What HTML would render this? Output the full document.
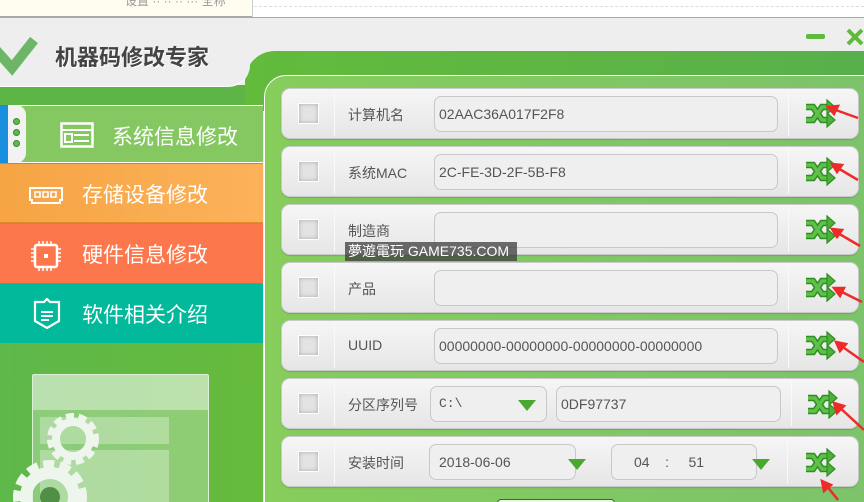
<!DOCTYPE html>
<html><head><meta charset="utf-8"><style>
*{margin:0;padding:0;box-sizing:border-box}
html,body{width:864px;height:502px;overflow:hidden}
body{position:relative;background:#eeeeee;font-family:"Liberation Sans","Noto Sans CJK SC",sans-serif}
.abs{position:absolute}
.row{position:absolute;left:281px;width:578px;height:51px;background:linear-gradient(#f6f6f6,#e6e6e6);border:1px solid #c9c9c9;border-radius:9px;box-shadow:0 1px 1px rgba(0,0,0,.15)}
.cb{position:absolute;left:16px;top:14px;width:21px;height:21px;background:#e3e3e3;border:1px solid #fff;box-shadow:inset 0 0 4px rgba(0,0,0,.25)}
.d1{position:absolute;left:52px;top:2px;bottom:2px;width:1px;background:#d6d6d6;border-right:1px solid #fafafa}
.d2{position:absolute;left:506px;top:2px;bottom:2px;width:1px;background:#d6d6d6;border-right:1px solid #fafafa}
.lb{position:absolute;left:66px;top:16px;font-size:14px;color:#555}
.in{position:absolute;top:7px;height:36px;background:#efefef;border:1px solid #c8c8c8;border-radius:7px;font-size:14px;color:#555;padding:9px 4px}
.tri{position:absolute;width:0;height:0;border-left:9px solid transparent;border-right:9px solid transparent;border-top:11px solid #4aa82e}
.menu{position:absolute;left:0;width:263px;color:#fff;font-size:21px}
.menu span{position:absolute;left:82px;top:15px}
</style></head><body>
<div class="abs" style="left:0;top:0;width:864px;height:18px;background:#fffdf0;border-bottom:2px solid #a9a9a9"></div>
<div class="abs" style="left:252px;top:0;width:612px;height:17px;background:#fff;border-left:1px solid #ccc"></div>
<div class="abs" style="left:254px;top:6px;width:610px;border-top:1px dashed #ddd"></div>
<div class="abs" style="left:125px;top:-8px;font-size:12px;color:#999">设置 ·· ·· ·· ··· 全称</div>
<div class="abs" style="left:0;top:85px;width:300px;height:25px;background:#5db545"></div>
<div class="abs" style="left:245px;top:51px;width:619px;height:60px;background:linear-gradient(90deg,#63bb3c,#58b04c);border-radius:30px 0 0 0"></div>
<div class="abs" style="left:0;top:18px;width:250px;height:68px;background:#eeeeee;border-bottom-right-radius:22px;box-shadow:0 1px 0 #fff"></div>
<svg class="abs" style="left:0;top:30px" width="40" height="52" viewBox="0 0 40 52"><path d="M-4 20 L12 38 L34 10" fill="none" stroke="#6db668" stroke-width="10"/></svg>
<div class="abs" style="left:55px;top:40px;font-size:22px;font-weight:bold;color:#444;text-shadow:1px 1px 0 #fff">机器码修改专家</div>
<div class="abs" style="left:806px;top:34px;width:19px;height:5px;background:#5dba3a;border-radius:2px"></div>
<svg class="abs" style="left:846px;top:28px" width="18" height="18"><path d="M2 2 L16 16 M16 2 L2 16" stroke="#5dba3a" stroke-width="4"/></svg>
<div class="abs" style="left:264px;top:75px;width:610px;height:440px;background:linear-gradient(90deg,#86cd5c,#7cc36b);border:1px solid #fff;border-radius:22px 0 0 0"></div>
<div class="abs" style="left:0;top:105px;width:263px;height:400px;background:linear-gradient(90deg,#5eb84a,#66bb3c)"></div>
<div class="menu" style="top:105px;height:58px;background:#85c862;border-top:1px solid #fff;border-bottom:1px solid #fff"><span style="left:112px;top:15px">系统信息修改</span></div>
<div class="abs" style="left:0;top:105px;width:26px;height:58px;background:#f2f2f2;border-radius:0 10px 10px 0;border-left:8px solid #1a8fe0"></div>
<div class="abs" style="left:13px;top:118px;width:7px;height:7px;border-radius:50%;background:#5fb94b;border:1px solid #3b8a2c"></div>
<div class="abs" style="left:13px;top:129px;width:7px;height:7px;border-radius:50%;background:#5fb94b;border:1px solid #3b8a2c"></div>
<div class="abs" style="left:13px;top:140px;width:7px;height:7px;border-radius:50%;background:#5fb94b;border:1px solid #3b8a2c"></div>
<svg class="abs" style="left:60px;top:122px" width="34" height="26"><rect x="1.5" y="1.5" width="31" height="23" fill="none" stroke="#fff" stroke-width="2.5"/><line x1="1" y1="8" x2="33" y2="8" stroke="#fff" stroke-width="2"/><rect x="5" y="12" width="7" height="8" fill="none" stroke="#fff" stroke-width="2"/><path d="M14 13h15M14 19h15" stroke="#fff" stroke-width="2"/></svg>
<div class="menu" style="top:164px;height:59px;background:linear-gradient(90deg,#f6a444,#fcb25a);border-bottom:1px solid #e08a2a"><span>存储设备修改</span></div>
<svg class="abs" style="left:28px;top:185px" width="36" height="20"><path d="M2 3h32v12h-2v3H4v-3H2z" fill="none" stroke="#fff" stroke-width="2"/><path d="M7 7h5v5H7zM15 7h5v5h-5zM23 7h5v5h-5z" fill="none" stroke="#fff" stroke-width="1.6"/></svg>
<div class="menu" style="top:224px;height:60px;background:#fd774c;border-bottom:1px solid #e0603a"><span>硬件信息修改</span></div>
<svg class="abs" style="left:30px;top:240px" width="32" height="32"><rect x="5" y="5" width="22" height="22" rx="2" fill="none" stroke="#fff" stroke-width="2.5"/><path d="M9 1v4M13 1v4M17 1v4M21 1v4M9 27v4M13 27v4M17 27v4M21 27v4M1 9h4M1 13h4M1 17h4M1 21h4M27 9h4M27 13h4M27 17h4M27 21h4" stroke="#fff" stroke-width="1.5"/><rect x="14" y="14" width="4" height="4" fill="#fff"/></svg>
<div class="menu" style="top:284px;height:59px;background:#02b99b"><span>软件相关介绍</span></div>
<svg class="abs" style="left:33px;top:298px" width="28" height="32"><path d="M2 4h9l3-3 3 3h9v19l-12 7-12-7z" fill="none" stroke="#fff" stroke-width="2.2"/><path d="M8 14h12M8 18h12M8 22h8" stroke="#fff" stroke-width="2"/></svg>
<div class="abs" style="left:32px;top:374px;width:177px;height:140px;background:rgba(255,255,255,.28);border:1px solid rgba(255,255,255,.7);border-radius:2px"></div>
<div class="abs" style="left:33px;top:375px;width:175px;height:35px;background:rgba(255,255,255,.4)"></div>
<div class="abs" style="left:40px;top:417px;width:129px;height:27px;background:rgba(255,255,255,.3)"></div>
<div class="abs" style="left:40px;top:450px;width:129px;height:60px;background:rgba(255,255,255,.3)"></div>
<svg class="abs" style="left:44px;top:410px" width="58" height="58"><circle cx="29" cy="29" r="20" fill="none" stroke="#eef5ec" stroke-width="12" stroke-dasharray="7 4"/><circle cx="29" cy="29" r="17" fill="none" stroke="#eef5ec" stroke-width="8"/></svg>
<svg class="abs" style="left:8px;top:455px" width="84" height="60"><circle cx="42" cy="42" r="30" fill="none" stroke="#eef5ec" stroke-width="14" stroke-dasharray="10 5"/><circle cx="42" cy="42" r="24" fill="none" stroke="#eef5ec" stroke-width="12"/><circle cx="42" cy="42" r="10" fill="#4f8f46"/></svg>
<div class="row" style="top:88px"><div class="cb"></div><div class="d1"></div><div class="lb">计算机名</div><div class="in" style="left:152px;width:344px">02AAC36A017F2F8</div><div class="d2"></div></div>
<div class="row" style="top:146px"><div class="cb"></div><div class="d1"></div><div class="lb">系统MAC</div><div class="in" style="left:152px;width:344px">2C-FE-3D-2F-5B-F8</div><div class="d2"></div></div>
<div class="row" style="top:204px"><div class="cb"></div><div class="d1"></div><div class="lb">制造商</div><div class="in" style="left:152px;width:344px"></div><div class="d2"></div></div>
<div class="row" style="top:262px"><div class="cb"></div><div class="d1"></div><div class="lb">产品</div><div class="in" style="left:152px;width:344px"></div><div class="d2"></div></div>
<div class="row" style="top:320px"><div class="cb"></div><div class="d1"></div><div class="lb">UUID</div><div class="in" style="left:152px;width:344px">00000000-00000000-00000000-00000000</div><div class="d2"></div></div>
<div class="row" style="top:378px"><div class="cb"></div><div class="d1"></div><div class="lb">分区序列号</div><div class="in" style="left:148px;width:117px;font-family:'Liberation Mono',monospace;font-size:13px;padding-left:8px">C:\</div><div class="tri" style="left:236px;top:21px"></div><div class="in" style="left:274px;width:225px">0DF97737</div><div class="d2" style="left:509px"></div></div>
<div class="row" style="top:436px"><div class="cb"></div><div class="d1"></div><div class="lb">安装时间</div><div class="in" style="left:147px;width:147px;padding-left:9px">2018-06-06</div><div class="tri" style="left:286px;top:22px"></div><div class="in" style="left:329px;width:146px;padding-left:22px">04 &nbsp;&nbsp;&nbsp;: &nbsp;&nbsp;&nbsp;&nbsp;51</div><div class="tri" style="left:470px;top:22px"></div><div class="d2" style="left:505px"></div></div>
<svg class="abs" style="left:0;top:0;pointer-events:none" width="864" height="502">
<defs><g id="sf"><path d="M0 4h7l9 13h6M0 17h7l9-13h6" fill="none" stroke="#2f8f25" stroke-width="6.5"/><path d="M0 4h7l9 13h6M0 17h7l9-13h6" fill="none" stroke="#5fc04a" stroke-width="3.5"/><path d="M21 -3l8 7-8 7zM21 10l8 7-8 7z" fill="#4fb03a" stroke="#2f8f25" stroke-width="1.2"/></g></defs>
<use href="#sf" x="806" y="103"/><use href="#sf" x="806" y="161"/><use href="#sf" x="806" y="219"/><use href="#sf" x="806" y="277"/><use href="#sf" x="806" y="335"/><use href="#sf" x="808" y="394"/><use href="#sf" x="806" y="452"/>
<g stroke="#ee2a2a" stroke-width="2.5" fill="#ee2a2a">
<path d="M858 118L833 109"/><path d="M828 107l10-1-4 8z"/>
<path d="M858 180L836 167"/><path d="M832 164l10 1-5 7z"/>
<path d="M860 246L836 232"/><path d="M832 229l10 1-5 7z"/>
<path d="M862 302L838 290"/><path d="M834 288l10 0-4 8z"/>
<path d="M864 362L840 345"/><path d="M836 342l10 2-6 7z"/>
<path d="M864 430L838 406"/><path d="M834 403l10 3-7 7z"/>
<path d="M838 500L826 485"/><path d="M822 481l9 4-7 6z"/>
</g></svg>
<div class="abs" style="left:497px;top:499px;width:118px;height:8px;border:1px solid #1e7a1e;border-radius:4px;background:#eaf5e6"></div>
<div class="abs" style="left:345px;top:242px;width:172px;height:19px;background:rgba(60,60,60,.75);color:#fff;font-size:14px;line-height:19px;padding-left:3px">夢遊電玩 GAME735.COM</div>
</body></html>
